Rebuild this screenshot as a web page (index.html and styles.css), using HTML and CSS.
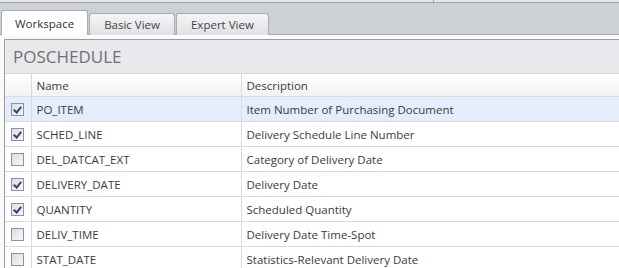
FILE: index.html
```html
<!DOCTYPE html>
<html lang="en">
<head>
    <meta charset="UTF-8">
    <title>POSCHEDULE</title>
    <link rel="stylesheet" href="styles.css">
</head>
<body>
    <div class="topbar"><div class="topbar-split"></div></div>
    <div class="tabstrip">
        <div class="tab active">Workspace</div>
        <div class="tab">Basic View</div>
        <div class="tab">Expert View</div>
    </div>

    <div class="panel">
        <div class="panel-title">POSCHEDULE</div>
        <table class="grid">
            <colgroup>
                <col class="col-check">
                <col class="col-name">
                <col>
            </colgroup>
            <thead>
                <tr>
                    <th></th>
                    <th>Name</th>
                    <th>Description</th>
                </tr>
            </thead>
            <tbody>
                <tr class="selected">
                    <td class="cell-check"><span class="checkbox checked"></span></td>
                    <td>PO_ITEM</td>
                    <td>Item Number of Purchasing Document</td>
                </tr>
                <tr>
                    <td class="cell-check"><span class="checkbox checked"></span></td>
                    <td>SCHED_LINE</td>
                    <td>Delivery Schedule Line Number</td>
                </tr>
                <tr>
                    <td class="cell-check"><span class="checkbox"></span></td>
                    <td>DEL_DATCAT_EXT</td>
                    <td>Category of Delivery Date</td>
                </tr>
                <tr>
                    <td class="cell-check"><span class="checkbox checked"></span></td>
                    <td>DELIVERY_DATE</td>
                    <td>Delivery Date</td>
                </tr>
                <tr>
                    <td class="cell-check"><span class="checkbox checked"></span></td>
                    <td>QUANTITY</td>
                    <td>Scheduled Quantity</td>
                </tr>
                <tr>
                    <td class="cell-check"><span class="checkbox"></span></td>
                    <td>DELIV_TIME</td>
                    <td>Delivery Date Time-Spot</td>
                </tr>
                <tr>
                    <td class="cell-check"><span class="checkbox"></span></td>
                    <td>STAT_DATE</td>
                    <td>Statistics-Relevant Delivery Date</td>
                </tr>
            </tbody>
        </table>
    </div>
</body>
</html>
```

FILE: styles.css
```css
body {
    margin: 0;
    font-family: "Open Sans", "Noto Sans", sans-serif;
    font-size: 11.5px;
    color: #3b3b3b;
    background: #fafafa;
    overflow: hidden;
}

.topbar {
    height: 2px;
    background: #e4e5e7;
    border-bottom: 1px solid #9fa2a6;
    position: relative;
}

.topbar-split {
    position: absolute;
    left: 433px;
    top: 0;
    width: 1px;
    height: 2px;
    background: #a0a3a7;
}

.tabstrip {
    height: 31px;
    background: #cdd0d4;
    border-bottom: 1px solid #a6a9ad;
    display: flex;
    align-items: flex-end;
    padding-left: 1px;
}

.tab {
    height: 21px;
    line-height: 21px;
    padding: 0 14px;
    margin-bottom: -1px;
    margin-right: 1px;
    color: #444;
    background: linear-gradient(#f4f5f6, #dfe1e4);
    border: 1px solid #a8abaf;
    border-bottom: none;
    border-radius: 3px 3px 0 0;
}

.tab.active {
    height: 24px;
    line-height: 25px;
    padding: 0 13px 0 13px;
    background: #fff;
    color: #333;
}

.panel {
    margin: 4px 0 0 4px;
    border-left: 1px solid #9c9c9c;
    border-top: 1px solid #9c9c9c;
    background: #fff;
}

.panel-title {
    height: 33px;
    line-height: 34px;
    padding-left: 8px;
    font-size: 17px;
    color: #717171;
    background: #e8e9ec;
    border-bottom: 1px solid #d7d7d9;
}

.grid {
    width: 100%;
    border-collapse: collapse;
    table-layout: fixed;
}

.col-check {
    width: 26px;
}

.col-name {
    width: 210px;
}

.grid th {
    height: 22px;
    padding: 0 0 0 5px;
    text-align: left;
    font-weight: normal;
    color: #3c3c3c;
    background: linear-gradient(#ffffff, #f1f2f4);
    border-left: 1px solid #dadada;
    border-bottom: 1px solid #dadada;
}

.grid td {
    height: 24px;
    padding: 0 0 0 5px;
    border-left: 1px solid #dadada;
    border-bottom: 1px solid #dadada;
    white-space: nowrap;
}

.grid th:first-child,
.grid td:first-child {
    border-left: none;
}

.grid td.cell-check {
    padding-left: 6px;
}

.grid tr.selected td {
    background: #e2eefb;
}

.checkbox {
    display: block;
    width: 11px;
    height: 11px;
    border: 1px solid #8d8fa8;
    background: linear-gradient(135deg, #dcdde3, #f7f7f9);
    position: relative;
}

.checkbox.checked::after {
    content: "";
    position: absolute;
    left: 3px;
    top: 1px;
    width: 3px;
    height: 6px;
    border-right: 2px solid #3b3f6e;
    border-bottom: 2px solid #3b3f6e;
    transform: rotate(40deg);
}
```
